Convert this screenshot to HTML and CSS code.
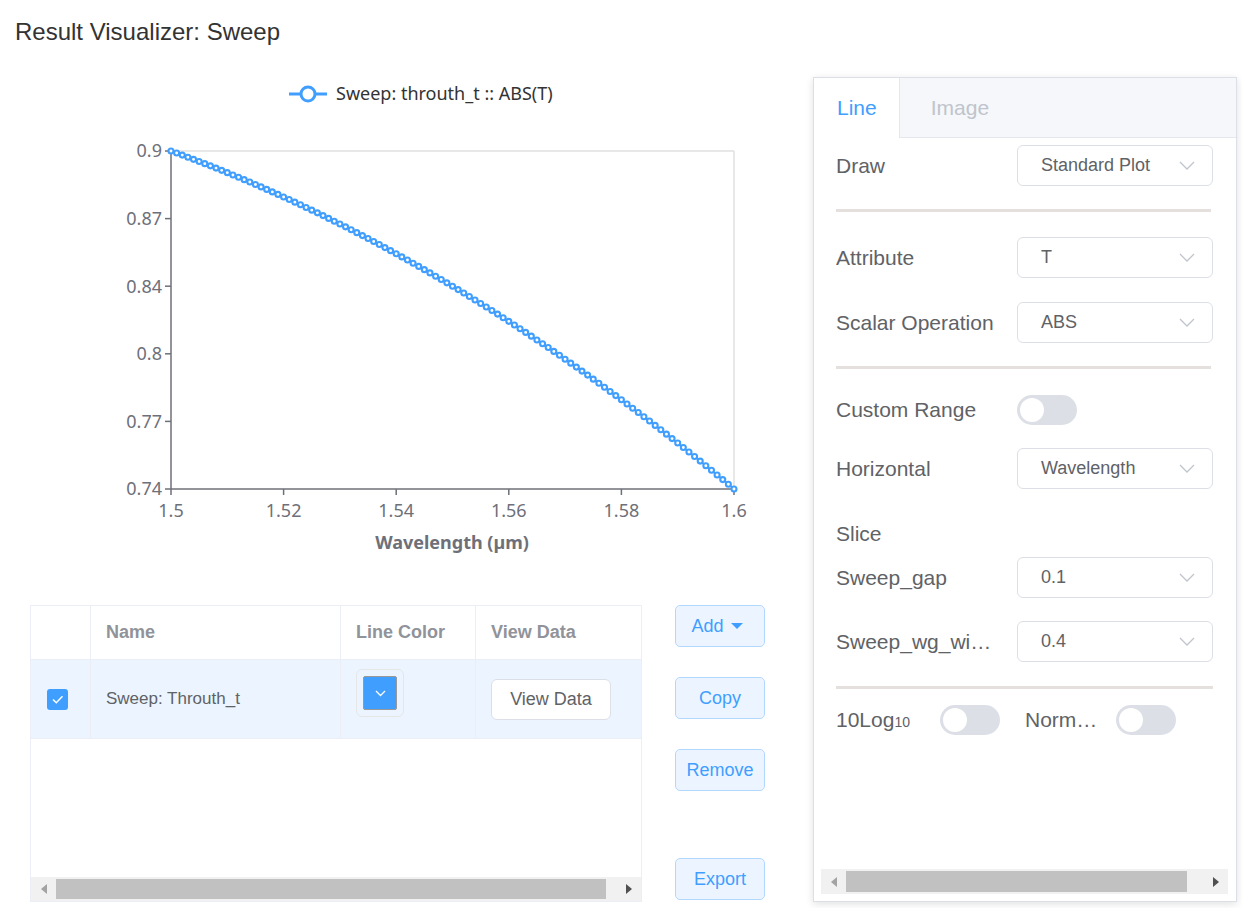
FILE: index.html
```html
<!DOCTYPE html>
<html lang="en">
<head>
<meta charset="utf-8">
<title>Result Visualizer: Sweep</title>
<link rel="stylesheet" href="styles.css">
</head>
<body>
<h1 class="title">Result Visualizer: Sweep</h1>
<div class="main">
  <div class="left">
    <svg class="chart" width="813" height="530" viewBox="0 46 813 530">
      <line class="legend-line" x1="289" y1="94" x2="327" y2="94"/>
      <circle class="legend-dot" cx="308" cy="94" r="7"/>
      <text class="legend-text" x="336" y="100">Sweep: throuth_t :: ABS(T)</text>

      <line class="frame-line" x1="171" y1="151" x2="734" y2="151"/>
      <line class="frame-line" x1="734" y1="151" x2="734" y2="489"/>

      <line class="axis-line" x1="171" y1="151" x2="171" y2="489"/>
      <line class="axis-line" x1="165" y1="151" x2="171" y2="151"/>
      <line class="axis-line" x1="165" y1="218.6" x2="171" y2="218.6"/>
      <line class="axis-line" x1="165" y1="286.2" x2="171" y2="286.2"/>
      <line class="axis-line" x1="165" y1="353.8" x2="171" y2="353.8"/>
      <line class="axis-line" x1="165" y1="421.4" x2="171" y2="421.4"/>
      <line class="axis-line" x1="165" y1="489" x2="171" y2="489"/>
      <text class="tick" x="162" y="157.4" text-anchor="end">0.9</text>
      <text class="tick" x="162" y="225" text-anchor="end">0.87</text>
      <text class="tick" x="162" y="292.6" text-anchor="end">0.84</text>
      <text class="tick" x="162" y="360.2" text-anchor="end">0.8</text>
      <text class="tick" x="162" y="427.8" text-anchor="end">0.77</text>
      <text class="tick" x="162" y="495.4" text-anchor="end">0.74</text>

      <line class="axis-line" x1="171" y1="489" x2="734" y2="489"/>
      <line class="axis-line" x1="171" y1="489" x2="171" y2="495"/>
      <line class="axis-line" x1="283.6" y1="489" x2="283.6" y2="495"/>
      <line class="axis-line" x1="396.2" y1="489" x2="396.2" y2="495"/>
      <line class="axis-line" x1="508.8" y1="489" x2="508.8" y2="495"/>
      <line class="axis-line" x1="621.4" y1="489" x2="621.4" y2="495"/>
      <line class="axis-line" x1="734" y1="489" x2="734" y2="495"/>
      <text class="tick" x="171" y="517" text-anchor="middle">1.5</text>
      <text class="tick" x="283.6" y="517" text-anchor="middle">1.52</text>
      <text class="tick" x="396.2" y="517" text-anchor="middle">1.54</text>
      <text class="tick" x="508.8" y="517" text-anchor="middle">1.56</text>
      <text class="tick" x="621.4" y="517" text-anchor="middle">1.58</text>
      <text class="tick" x="734" y="517" text-anchor="middle">1.6</text>
      <text class="axis-name" x="452" y="549" text-anchor="middle">Wavelength (µm)</text>

      <polyline id="curve" class="curve" points=""/>
      <g id="points"></g>
    </svg>

    <div class="bottom">
      <div class="table">
        <div class="thead">
          <div class="cell th"></div>
          <div class="cell th">Name</div>
          <div class="cell th">Line Color</div>
          <div class="cell th">View Data</div>
        </div>
        <div class="trow">
          <div class="cell td">
            <span class="checkbox">
              <svg width="21" height="21" viewBox="0 0 21 21"><polyline points="6,10.5 9.3,13.8 15.5,7.3"/></svg>
            </span>
          </div>
          <div class="cell td">Sweep: Throuth_t</div>
          <div class="cell td td-top">
            <span class="picker">
              <span class="picker-color">
                <svg width="11" height="7" viewBox="0 0 11 7"><polyline points="1,1 5.5,5.5 10,1"/></svg>
              </span>
            </span>
          </div>
          <div class="cell td"><button class="btn-plain">View Data</button></div>
        </div>
        <div class="tfill"></div>
        <div class="hscroll table-scroll">
          <div class="sb-btn"><span class="arrow-left"></span></div>
          <div class="sb-track"><div class="sb-thumb"></div></div>
          <div class="sb-btn"><span class="arrow-right"></span></div>
        </div>
      </div>
      <div class="actions">
        <button class="btn btn-add">Add <span class="caret"></span></button>
        <button class="btn">Copy</button>
        <button class="btn">Remove</button>
        <button class="btn btn-export">Export</button>
      </div>
    </div>
  </div>

  <div class="panel">
    <div class="tabs">
      <div class="tab active">Line</div>
      <div class="tab disabled">Image</div>
    </div>
    <div class="panel-body">
      <div class="form-row">
        <span class="label">Draw</span>
        <div class="select"><span>Standard Plot</span><svg class="chev" width="16" height="9" viewBox="0 0 16 9"><polyline points="1,1 8,8 15,1"/></svg></div>
      </div>
      <div class="divider d1"></div>
      <div class="form-row">
        <span class="label">Attribute</span>
        <div class="select"><span>T</span><svg class="chev" width="16" height="9" viewBox="0 0 16 9"><polyline points="1,1 8,8 15,1"/></svg></div>
      </div>
      <div class="form-row mt24">
        <span class="label">Scalar Operation</span>
        <div class="select"><span>ABS</span><svg class="chev" width="16" height="9" viewBox="0 0 16 9"><polyline points="1,1 8,8 15,1"/></svg></div>
      </div>
      <div class="divider d2"></div>
      <div class="switch-row">
        <span class="label">Custom Range</span>
        <span class="switch"><span class="knob"></span></span>
      </div>
      <div class="form-row mt23">
        <span class="label">Horizontal</span>
        <div class="select"><span>Wavelength</span><svg class="chev" width="16" height="9" viewBox="0 0 16 9"><polyline points="1,1 8,8 15,1"/></svg></div>
      </div>
      <div class="slice">Slice</div>
      <div class="form-row mt11">
        <span class="label">Sweep_gap</span>
        <div class="select"><span>0.1</span><svg class="chev" width="16" height="9" viewBox="0 0 16 9"><polyline points="1,1 8,8 15,1"/></svg></div>
      </div>
      <div class="form-row mt23">
        <span class="label">Sweep_wg_wi…</span>
        <div class="select"><span>0.4</span><svg class="chev" width="16" height="9" viewBox="0 0 16 9"><polyline points="1,1 8,8 15,1"/></svg></div>
      </div>
      <div class="divider d3"></div>
      <div class="log-row">
        <span class="log-label">10Log<span class="small">10</span></span>
        <span class="switch"><span class="knob"></span></span>
        <span class="norm-label">Norm…</span>
        <span class="switch"><span class="knob"></span></span>
      </div>
    </div>
    <div class="hscroll panel-scroll">
      <div class="sb-btn"><span class="arrow-left"></span></div>
      <div class="sb-track"><div class="sb-thumb"></div></div>
      <div class="sb-btn"><span class="arrow-right"></span></div>
    </div>
  </div>
</div>
<script src="script.js"></script>
</body>
</html>
```

FILE: styles.css
```css
* { box-sizing: border-box; }
html, body { margin: 0; padding: 0; }
body {
  font-family: "Liberation Sans", Arial, sans-serif;
  color: #606266;
  background: #fff;
  width: 1242px;
  height: 908px;
  overflow: hidden;
}
.title {
  margin: 0;
  padding: 18px 0 0 15px;
  height: 46px;
  font-size: 24px;
  line-height: 28px;
  font-weight: normal;
  color: #333;
}
.main { display: flex; align-items: flex-start; }
.left { width: 813px; flex: none; }

/* chart */
.chart { display: block; }
.chart text { font-family: "Noto Sans", sans-serif; }
.legend-line { stroke: #409eff; stroke-width: 3; }
.legend-dot { fill: #fff; stroke: #409eff; stroke-width: 3; }
.legend-text { font-size: 18px; fill: #333; }
.frame-line { stroke: #e0e0e0; stroke-width: 1.5; }
.axis-line { stroke: #6e7079; stroke-width: 1.5; }
.tick { font-size: 18px; fill: #6e7079; }
.axis-name { font-size: 18px; font-weight: bold; fill: #6e7079; }
.curve { fill: none; stroke: #409eff; stroke-width: 2; }
.pt { fill: #fff; stroke: #409eff; stroke-width: 2.1; }

/* table area */
.bottom { display: flex; padding-left: 30px; margin-top: 29px; gap: 33px; }
.table {
  width: 612px;
  height: 297px;
  border: 1px solid #ebeef5;
  display: flex;
  flex-direction: column;
}
.thead, .trow { display: grid; grid-template-columns: 60px 250px 135px 1fr; }
.thead { height: 54px; }
.trow { height: 79px; background: #ecf5ff; }
.cell {
  display: flex;
  align-items: center;
  padding-left: 15px;
  border-right: 1px solid #ebeef5;
  border-bottom: 1px solid #ebeef5;
}
.cell:last-child { border-right: none; }
.th { font-size: 18px; font-weight: bold; color: #909399; }
.td { font-size: 17px; color: #606266; }
.td-top { align-items: flex-start; padding-top: 9px; }
.checkbox {
  width: 21px;
  height: 21px;
  border-radius: 3px;
  background: #409eff;
  display: flex;
  margin-left: 1px;
}
.checkbox polyline { fill: none; stroke: #fff; stroke-width: 1.5; }
.picker {
  width: 48px;
  height: 48px;
  border: 1px solid #e6e6e6;
  border-radius: 6px;
  padding: 6px;
  display: flex;
}
.picker-color {
  flex: 1;
  background: #409eff;
  border: 1px solid #999;
  border-radius: 2px;
  display: flex;
  align-items: center;
  justify-content: center;
}
.picker-color polyline { fill: none; stroke: #fff; stroke-width: 1.3; }
.btn-plain {
  width: 120px;
  height: 41px;
  border: 1px solid #dcdfe6;
  border-radius: 6px;
  background: #fff;
  font-family: inherit;
  font-size: 18px;
  color: #606266;
  padding: 0;
}
.tfill { flex: 1; }

/* fake scrollbars */
.hscroll { display: flex; align-items: stretch; background: #f1f1f1; flex: none; }
.table-scroll { height: 24px; }
.panel-scroll { height: 25px; margin: 0 8px 7px 7px; }
.sb-btn { width: 25px; display: flex; align-items: center; justify-content: center; flex: none; }
.sb-track { flex: 1; display: flex; padding: 2px 0; }
.sb-thumb { background: #c1c1c1; }
.table-scroll .sb-thumb { width: 550px; }
.panel-scroll .sb-thumb { width: 341px; }
.arrow-left {
  width: 0; height: 0;
  border-top: 5px solid transparent;
  border-bottom: 5px solid transparent;
  border-right: 6px solid #a3a3a3;
}
.arrow-right {
  width: 0; height: 0;
  border-top: 5px solid transparent;
  border-bottom: 5px solid transparent;
  border-left: 6px solid #505050;
}

/* action buttons */
.actions {
  width: 90px;
  height: 297px;
  display: flex;
  flex-direction: column;
  padding-bottom: 2px;
}
.btn {
  height: 42px;
  border: 1px solid #b3d8ff;
  border-radius: 5px;
  background: #ecf5ff;
  color: #409eff;
  font-family: inherit;
  font-size: 18px;
  padding: 0;
  display: flex;
  align-items: center;
  justify-content: center;
  flex: none;
}
.btn + .btn { margin-top: 30px; }
.btn-add { gap: 7px; padding-right: 6px; }
.btn-export { margin-top: auto !important; }
.caret {
  width: 0; height: 0;
  border-left: 6px solid transparent;
  border-right: 6px solid transparent;
  border-top: 6px solid #409eff;
}

/* right panel */
.panel {
  width: 424px;
  height: 825px;
  margin-top: 31px;
  border: 1px solid #dcdfe6;
  background: #fff;
  box-shadow: 0 2px 8px rgba(0, 0, 0, 0.12);
  display: flex;
  flex-direction: column;
  flex: none;
}
.tabs {
  display: flex;
  height: 60px;
  background: #f5f7fa;
  border-bottom: 1px solid #e4e7ed;
  flex: none;
}
.tab { font-size: 21px; line-height: 59px; height: 59px; }
.tab.active {
  background: #fff;
  color: #409eff;
  padding: 0 22px 0 23px;
  border-right: 1px solid #e4e7ed;
  height: 60px;
}
.tab.disabled { color: #c0c4cc; padding-left: 31px; }
.panel-body { flex: 1; padding: 7px 0 0 22px; }
.form-row { display: flex; align-items: center; height: 41px; }
.label {
  width: 160px;
  margin-right: 21px;
  font-size: 21px;
  color: #606266;
  white-space: nowrap;
  overflow: hidden;
  text-overflow: ellipsis;
  flex: none;
}
.select {
  width: 196px;
  height: 41px;
  border: 1px solid #dcdfe6;
  border-radius: 6px;
  padding: 0 17px 0 23px;
  display: flex;
  align-items: center;
  justify-content: space-between;
  font-size: 18px;
  color: #606266;
}
.chev polyline { fill: none; stroke: #c0c4cc; stroke-width: 1.3; }
.mt24 { margin-top: 24px; }
.mt23 { margin-top: 23px; }
.mt11 { margin-top: 11px; }
.divider { height: 3px; background: #e5e0de; width: 375px; }
.d1 { margin: 23px 0 25px; }
.d2 { margin: 23px 0 26px; }
.d3 { margin: 24px 0 16px; width: 377px; }
.switch-row { display: flex; align-items: center; height: 30px; }
.switch {
  width: 60px;
  height: 30px;
  border-radius: 15px;
  background: #dcdfe6;
  display: flex;
  align-items: center;
  padding: 0 3px;
  flex: none;
}
.knob { width: 24px; height: 24px; border-radius: 50%; background: #fff; }
.slice { margin-top: 33px; font-size: 21px; line-height: 24px; color: #606266; }
.log-row { display: flex; align-items: center; height: 30px; font-size: 21px; color: #606266; }
.log-label { width: 104px; flex: none; }
.small { font-size: 14px; }
.norm-label { width: 91px; margin-left: 25px; flex: none; }
```

FILE: script.js
```js
(function () {
  var NS = 'http://www.w3.org/2000/svg';
  var g = document.getElementById('points');
  var line = document.getElementById('curve');
  var x0 = 171, x1 = 734, y0 = 151, y1 = 489, n = 100;
  var pts = [];
  for (var i = 0; i <= n; i++) {
    var t = i / n;
    var x = x0 + (x1 - x0) * t;
    var y = y0 + (y1 - y0) * (0.6 * t + 0.4 * t * t);
    pts.push(x.toFixed(2) + ',' + y.toFixed(2));
    var c = document.createElementNS(NS, 'circle');
    c.setAttribute('class', 'pt');
    c.setAttribute('cx', x.toFixed(2));
    c.setAttribute('cy', y.toFixed(2));
    c.setAttribute('r', '2.5');
    g.appendChild(c);
  }
  line.setAttribute('points', pts.join(' '));
})();
```
